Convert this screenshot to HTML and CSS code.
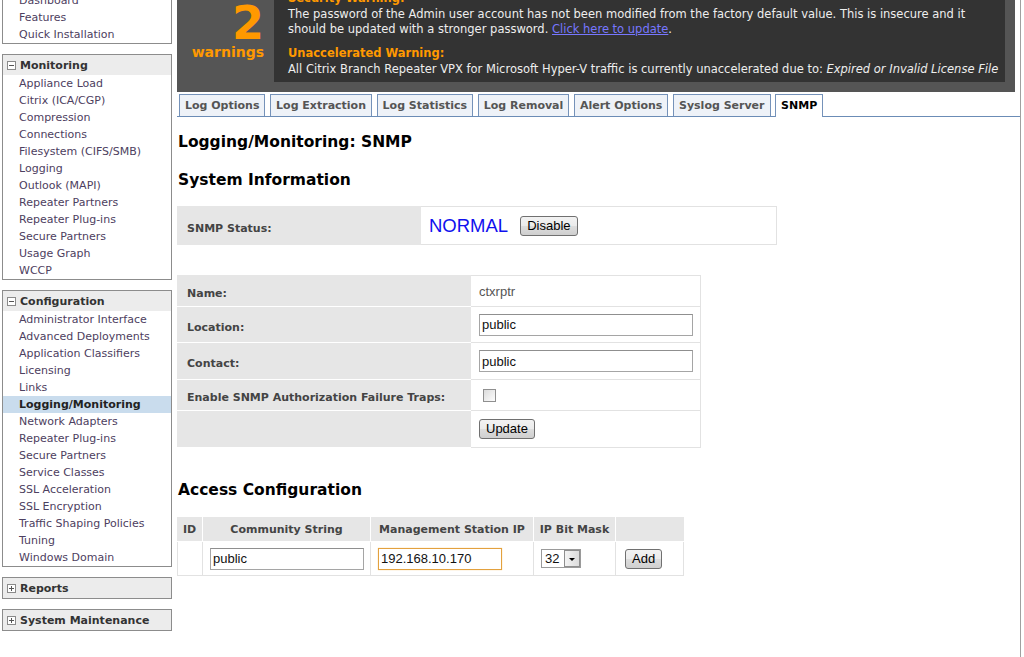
FILE: index.html
```html
<!DOCTYPE html>
<html lang="en">
<head>
<meta charset="utf-8">
<title>Logging/Monitoring: SNMP</title>
<link rel="stylesheet" href="styles.css">
</head>
<body>
<div class="page">
  <nav class="sidebar">
    <div class="box">
      <div class="box-head"><span class="tog"></span>Home</div>
      <a href="#">Dashboard</a>
      <a href="#">Features</a>
      <a href="#">Quick Installation</a>
    </div>
    <div class="box">
      <div class="box-head"><span class="tog"></span>Monitoring</div>
      <a href="#">Appliance Load</a>
      <a href="#">Citrix (ICA/CGP)</a>
      <a href="#">Compression</a>
      <a href="#">Connections</a>
      <a href="#">Filesystem (CIFS/SMB)</a>
      <a href="#">Logging</a>
      <a href="#">Outlook (MAPI)</a>
      <a href="#">Repeater Partners</a>
      <a href="#">Repeater Plug-ins</a>
      <a href="#">Secure Partners</a>
      <a href="#">Usage Graph</a>
      <a href="#">WCCP</a>
    </div>
    <div class="box">
      <div class="box-head"><span class="tog"></span>Configuration</div>
      <a href="#">Administrator Interface</a>
      <a href="#">Advanced Deployments</a>
      <a href="#">Application Classifiers</a>
      <a href="#">Licensing</a>
      <a href="#">Links</a>
      <a href="#" class="active">Logging/Monitoring</a>
      <a href="#">Network Adapters</a>
      <a href="#">Repeater Plug-ins</a>
      <a href="#">Secure Partners</a>
      <a href="#">Service Classes</a>
      <a href="#">SSL Acceleration</a>
      <a href="#">SSL Encryption</a>
      <a href="#">Traffic Shaping Policies</a>
      <a href="#">Tuning</a>
      <a href="#">Windows Domain</a>
    </div>
    <div class="box">
      <div class="box-head"><span class="tog plus"></span>Reports</div>
    </div>
    <div class="box">
      <div class="box-head"><span class="tog plus"></span>System Maintenance</div>
    </div>
  </nav>

  <main class="main">
    <div class="alerts">
      <div class="count">
        <div class="num">2</div>
        <div class="lbl">warnings</div>
      </div>
      <div class="msgs">
        <div class="title">Security Warning:</div>
        <p class="para">The password of the Admin user account has not been modified from the factory default value. This is insecure and it should be updated with a stronger password. <a href="#">Click here to update</a>.</p>
        <div class="title">Unaccelerated Warning:</div>
        <p>All Citrix Branch Repeater VPX for Microsoft Hyper-V traffic is currently unaccelerated due to: <em>Expired or Invalid License File</em></p>
      </div>
    </div>

    <ul class="tabs">
      <li class="tab">Log Options</li>
      <li class="tab">Log Extraction</li>
      <li class="tab">Log Statistics</li>
      <li class="tab">Log Removal</li>
      <li class="tab">Alert Options</li>
      <li class="tab">Syslog Server</li>
      <li class="tab active">SNMP</li>
    </ul>

    <h1 class="heading">Logging/Monitoring: SNMP</h1>
    <h2 class="heading sub">System Information</h2>

    <div class="status">
      <div class="cell-lbl">SNMP Status:</div>
      <div class="cell-val"><span class="normal">NORMAL</span><button class="btn">Disable</button></div>
    </div>

    <div class="info">
      <div class="cell-lbl r1">Name:</div>
      <div class="cell-val r1 plain">ctxrptr</div>
      <div class="cell-lbl r2">Location:</div>
      <div class="cell-val r2"><input class="txt" type="text" value="public"></div>
      <div class="cell-lbl r3">Contact:</div>
      <div class="cell-val r3"><input class="txt" type="text" value="public"></div>
      <div class="cell-lbl r4">Enable SNMP Authorization Failure Traps:</div>
      <div class="cell-val r4"><input class="chk" type="checkbox"></div>
      <div class="cell-lbl r5"></div>
      <div class="cell-val r5"><button class="btn">Update</button></div>
    </div>

    <h2 class="heading access-h">Access Configuration</h2>

    <div class="access">
      <div class="th th-id">ID</div>
      <div class="th">Community String</div>
      <div class="th">Management Station IP</div>
      <div class="th">IP Bit Mask</div>
      <div class="th th-last"></div>
      <div class="td"></div>
      <div class="td"><input class="txt comm" type="text" value="public"></div>
      <div class="td"><input class="txt ip" type="text" value="192.168.10.170"></div>
      <div class="td"><span class="select"><span class="sel-val">32</span><span class="sel-arrow"></span></span></div>
      <div class="td td-add"><button class="btn">Add</button></div>
    </div>
  </main>
</div>
</body>
</html>
```
FILE: styles.css
```css
* { box-sizing: border-box; }

body {
  margin: 0;
  background: #fff;
  color: #333;
  font-family: "DejaVu Sans", Verdana, sans-serif;
  font-size: 11px;
}

.page {
  display: flex;
  align-items: flex-start;
  margin-top: -29px;
}

/* ---------- sidebar ---------- */
.sidebar {
  flex: none;
  width: 170px;
  margin: 0 5px 0 2px;
}

.box {
  border: 1px solid #8c8c8c;
  margin-bottom: 10px;
  background: #fff;
}

.box-head {
  display: flex;
  align-items: center;
  height: 20px;
  background: #ececec;
  color: #333;
  font-weight: bold;
}

.tog {
  position: relative;
  flex: none;
  width: 9px;
  height: 9px;
  margin: 0 4px 0 4px;
  border: 1px solid #8a8a8a;
  background: #fff;
}
.tog::after {
  content: "";
  position: absolute;
  left: 1px;
  top: 3px;
  width: 5px;
  height: 1px;
  background: #555;
}
.tog.plus::before {
  content: "";
  position: absolute;
  left: 3px;
  top: 1px;
  width: 1px;
  height: 5px;
  background: #555;
}

.box a {
  display: block;
  padding-left: 16px;
  padding-top: 1px;
  line-height: 16px;
  height: 17px;
  color: #4d4060;
  text-decoration: none;
  white-space: nowrap;
}
.box a.active {
  background: #c9dced;
  color: #222;
  font-weight: bold;
}

/* ---------- main ---------- */
.main {
  flex: none;
  width: 844px;
  min-height: 720px;
  border-right: 1px solid #a0a0a0;
}

.alerts {
  display: flex;
  margin-right: 5px;
  padding: 6px 10px 10px 0;
  background: #555;
}

.count {
  flex: none;
  width: 97px;
  padding: 23px 10px 0 0;
  text-align: right;
  color: #ff9900;
  font-weight: bold;
}
.num {
  font-size: 46px;
  line-height: 46px;
}
.lbl {
  margin-top: -2px;
  font-size: 14px;
  line-height: 16px;
}

.msgs {
  flex: 1;
  padding: 13px 2px 5px 14px;
  background: #333;
  color: #eee;
  font-size: 11.5px;
  line-height: 15px;
}
.msgs .title {
  color: #ff9900;
  font-weight: bold;
  font-size: 11.5px;
  line-height: 17px;
}
.msgs p { margin: 0; white-space: nowrap; }
.msgs .para { margin-bottom: 8px; max-width: 700px; white-space: normal; }
.msgs a { color: #7777ff; }

/* ---------- tabs ---------- */
.tabs {
  display: flex;
  gap: 4.6px;
  height: 23px;
  margin: 2px 0 0;
  padding: 0 0 0 2px;
  list-style: none;
  border-bottom: 1px solid #6b8cb6;
}
.tab {
  height: 22px;
  padding: 0 5px;
  line-height: 21px;
  border: 1px solid #7592b9;
  border-bottom: 0;
  background: #eef2f8;
  color: #555;
  font-weight: bold;
  white-space: nowrap;
}
.tab.active {
  height: 23px;
  background: #fff;
  color: #000;
}

/* ---------- headings ---------- */
.heading {
  margin: 15px 0 0 1px;
  font-size: 15.5px;
  line-height: 20px;
  color: #000;
  font-weight: bold;
}
.heading.sub { margin-top: 18px; }
.heading.access-h { margin-top: 32px; }

/* ---------- forms ---------- */
.cell-lbl {
  padding: 5px 0 0 10px;
  background: #e6e6e6;
  color: #444;
  font-weight: bold;
  display: flex;
  align-items: center;
}
.cell-val {
  display: flex;
  align-items: center;
  padding-left: 8px;
  border-right: 1px solid #e2e2e2;
  border-bottom: 1px solid #e2e2e2;
}

.status {
  display: grid;
  grid-template-columns: 244px 356px;
  height: 39px;
  margin-top: 16px;
}
.status .cell-val { border-top: 1px solid #e2e2e2; }

.normal {
  font-family: "Liberation Sans", Arial, sans-serif;
  font-size: 18.5px;
  color: #1010ee;
  margin-right: 12px;
}

.info {
  display: grid;
  grid-template-columns: 294px 230px;
  grid-template-rows: 32px 36px 37px 31px 37px;
  margin-top: 30px;
}
.info .cell-lbl { border-bottom: 1px solid #fff; }
.info .cell-val.r1 { border-top: 1px solid #e2e2e2; }
.info .cell-val.plain {
  font-family: "Liberation Sans", Arial, sans-serif;
  font-size: 13px;
  color: #555;
}

.txt {
  width: 214px;
  height: 22px;
  margin: 0;
  padding: 0 2px;
  border: 1px solid #a5a5a5;
  border-top-color: #8f8f8f;
  font-family: "Liberation Sans", Arial, sans-serif;
  font-size: 13px;
  color: #111;
  background: #fff;
}

.chk {
  appearance: none;
  -webkit-appearance: none;
  width: 13px;
  height: 13px;
  margin: 0 0 0 4px;
  border: 1px solid #8f8f8f;
  background: linear-gradient(135deg, #dcdcdc, #fdfdfd);
}

.btn {
  height: 20px;
  margin: 0;
  padding: 0 6px;
  border: 1px solid #707070;
  border-radius: 3px;
  background: linear-gradient(#f2f2f2 0%, #ebebeb 50%, #dddddd 51%, #cfcfcf 100%);
  font-family: "Liberation Sans", Arial, sans-serif;
  font-size: 13px;
  color: #000;
  line-height: 18px;
}

/* ---------- access table ---------- */
.access {
  display: grid;
  grid-template-columns: 26px 168px 163px 82px 68px;
  grid-template-rows: 25px 34px;
  width: 507px;
  margin-top: 17px;
}
.th {
  display: flex;
  align-items: center;
  justify-content: center;
  background: #e6e6e6;
  border-right: 1px solid #fff;
  border-bottom: 1px solid #fff;
  color: #444;
  font-weight: bold;
  white-space: nowrap;
}
.th-id { justify-content: flex-start; padding-left: 6px; }
.th-last { border-right: 0; }
.td {
  display: flex;
  align-items: center;
  padding-left: 7px;
  border-right: 1px solid #e2e2e2;
  border-bottom: 1px solid #e2e2e2;
}
.td:nth-child(6) { border-left: 1px solid #e2e2e2; }
.td-add { padding-left: 9px; }

.txt.comm { width: 154px; }
.txt.ip {
  width: 124px;
  border: 1px solid #e3a13e;
  box-shadow: 0 0 1px #f5c77e;
}

.select {
  display: flex;
  width: 40px;
  height: 19px;
  border: 1px solid #9a9a9a;
  background: #fff;
  font-family: "Liberation Sans", Arial, sans-serif;
  font-size: 13px;
  color: #111;
}
.sel-val {
  flex: 1;
  padding-left: 3px;
  line-height: 17px;
}
.sel-arrow {
  position: relative;
  width: 16px;
  border: 1px solid #8e8e8e;
  margin: 0;
  background: linear-gradient(90deg, #f3f3f3, #dcdcdc);
}
.sel-arrow::after {
  content: "";
  position: absolute;
  left: 4px;
  top: 7px;
  border-left: 3px solid transparent;
  border-right: 3px solid transparent;
  border-top: 3px solid #000;
}
```
